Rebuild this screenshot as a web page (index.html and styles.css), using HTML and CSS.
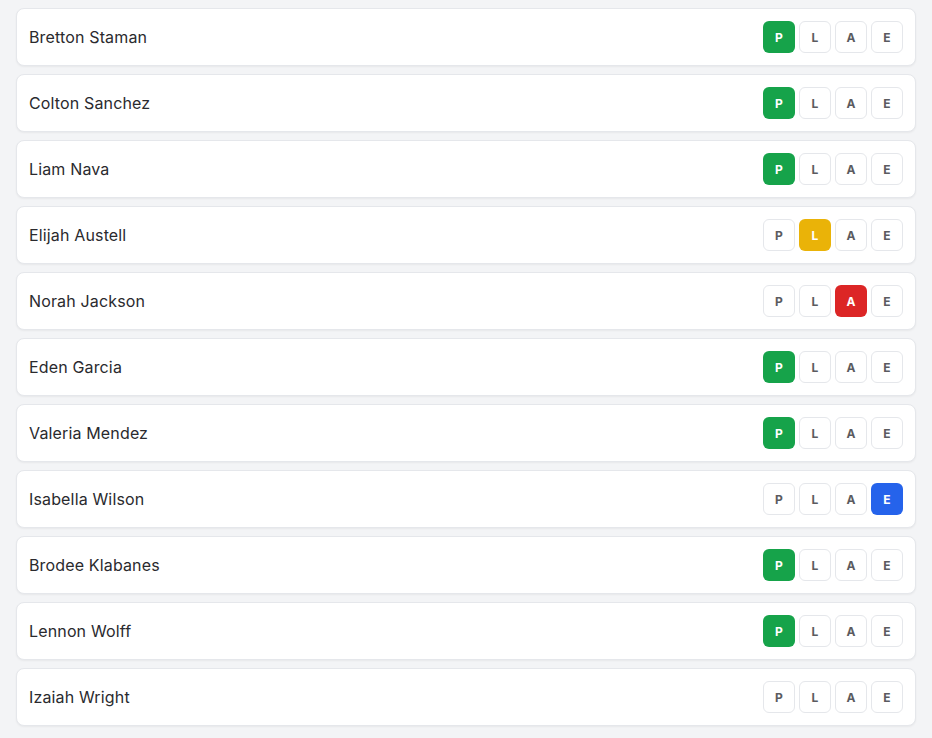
FILE: index.html
```
<!DOCTYPE html>
<html lang="en">
<head>
    <meta charset="UTF-8">
    <title>Attendance</title>
    <link rel="stylesheet" href="styles.css">
</head>
<body>
<ul class="roster">
    <li class="row">
        <span class="name">Bretton Staman</span>
        <div class="marks"><a class="mark p on">P</a><a class="mark">L</a><a class="mark">A</a><a class="mark">E</a></div>
    </li>
    <li class="row">
        <span class="name">Colton Sanchez</span>
        <div class="marks"><a class="mark p on">P</a><a class="mark">L</a><a class="mark">A</a><a class="mark">E</a></div>
    </li>
    <li class="row">
        <span class="name">Liam Nava</span>
        <div class="marks"><a class="mark p on">P</a><a class="mark">L</a><a class="mark">A</a><a class="mark">E</a></div>
    </li>
    <li class="row">
        <span class="name">Elijah Austell</span>
        <div class="marks"><a class="mark">P</a><a class="mark l on">L</a><a class="mark">A</a><a class="mark">E</a></div>
    </li>
    <li class="row">
        <span class="name">Norah Jackson</span>
        <div class="marks"><a class="mark">P</a><a class="mark">L</a><a class="mark a on">A</a><a class="mark">E</a></div>
    </li>
    <li class="row">
        <span class="name">Eden Garcia</span>
        <div class="marks"><a class="mark p on">P</a><a class="mark">L</a><a class="mark">A</a><a class="mark">E</a></div>
    </li>
    <li class="row">
        <span class="name">Valeria Mendez</span>
        <div class="marks"><a class="mark p on">P</a><a class="mark">L</a><a class="mark">A</a><a class="mark">E</a></div>
    </li>
    <li class="row">
        <span class="name">Isabella Wilson</span>
        <div class="marks"><a class="mark">P</a><a class="mark">L</a><a class="mark">A</a><a class="mark e on">E</a></div>
    </li>
    <li class="row">
        <span class="name">Brodee Klabanes</span>
        <div class="marks"><a class="mark p on">P</a><a class="mark">L</a><a class="mark">A</a><a class="mark">E</a></div>
    </li>
    <li class="row">
        <span class="name">Lennon Wolff</span>
        <div class="marks"><a class="mark p on">P</a><a class="mark">L</a><a class="mark">A</a><a class="mark">E</a></div>
    </li>
    <li class="row">
        <span class="name">Izaiah Wright</span>
        <div class="marks"><a class="mark">P</a><a class="mark">L</a><a class="mark">A</a><a class="mark">E</a></div>
    </li>
</ul>
</body>
</html>
```

FILE: styles.css
```
* {
    margin: 0;
    padding: 0;
    box-sizing: border-box;
}

ul, li {
    list-style: none;
}

body {
    background-color: #f3f4f6;
    font-family: "Inter", "Liberation Sans", sans-serif;
    padding: 8px 16px;
}

.roster {
    display: flex;
    flex-direction: column;
    gap: 8px;
}

.row {
    display: flex;
    align-items: center;
    justify-content: space-between;
    height: 58px;
    padding: 0 12px;
    background-color: #fff;
    border: 1px solid #e5e7eb;
    border-radius: 8px;
    box-shadow: 0 1px 2px rgba(0, 0, 0, 0.05);
}

.row .name {
    font-size: 16px;
    letter-spacing: 0.15px;
    color: #2a2a2e;
}

.marks {
    display: flex;
    gap: 4px;
}

.mark {
    display: flex;
    align-items: center;
    justify-content: center;
    width: 32px;
    height: 32px;
    border: 1px solid #e5e7eb;
    border-radius: 6px;
    background-color: #fff;
    font-size: 12px;
    font-weight: 700;
    color: #5b5b60;
    cursor: pointer;
}

.mark.on {
    color: #fff;
    border-color: transparent;
}

.mark.p.on {
    background-color: #16a34a;
}

.mark.l.on {
    background-color: #eab308;
}

.mark.a.on {
    background-color: #dc2626;
}

.mark.e.on {
    background-color: #2563eb;
}
```
